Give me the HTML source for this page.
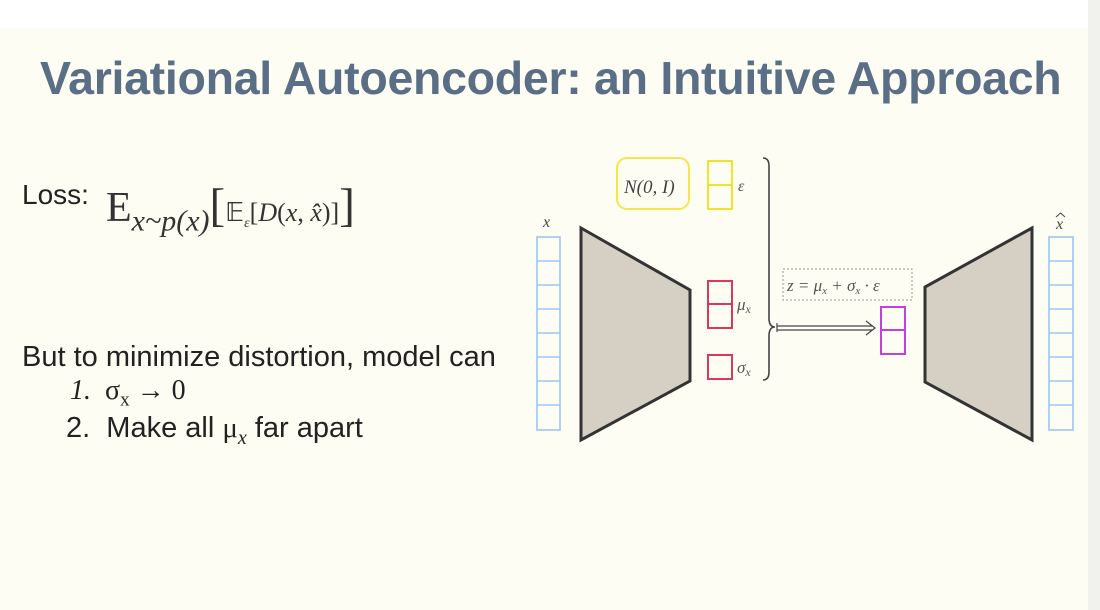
<!DOCTYPE html>
<html><head><style>
body{margin:0;width:1100px;height:610px;overflow:hidden;background:#fdfdf4;position:relative;font-family:"Liberation Sans",sans-serif}
.top{position:absolute;left:0;top:0;width:1100px;height:28px;background:#fff}
.strip{position:absolute;left:1088px;top:0;width:12px;height:610px;background:#f1f1ed}
.t{position:absolute;white-space:nowrap;line-height:1}
.title{left:40px;top:55px;font-size:46.5px;font-weight:bold;color:#5a6f86;letter-spacing:-0.3px}
.serif{font-family:"Liberation Serif",serif}
</style></head><body>
<div class="top"></div><div class="strip"></div>
<div class="t title">Variational Autoencoder: an Intuitive Approach</div>
<div class="t" style="left:22px;top:181px;font-size:28px;color:#222">Loss:</div>
<div class="t serif" style="left:106px;top:183px;font-size:42px;color:#333">E<sub style="font-size:30px;font-style:italic">x~p(x)</sub><span style="font-size:47px">[</span><span style="font-size:26px">𝔼<sub style="font-size:14px"><i>ε</i></sub>[<i>D</i>(<i>x</i>, <i>x̂</i>)]</span><span style="font-size:47px">]</span></div>
<div class="t" style="left:22px;top:343px;font-size:29px;color:#222">But to minimize distortion, model can</div>
<div class="t" style="left:70px;top:376px;font-size:28px;color:#222"><span class="serif"><i>1.</i>&nbsp; σ<sub style="font-size:19px">x</sub> → 0</span></div>
<div class="t" style="left:66px;top:414px;font-size:29px;color:#222">2.&nbsp; Make all <span class="serif">μ<sub style="font-size:20px"><i>x</i></sub></span> far apart</div>
<svg width="1100" height="610" style="position:absolute;left:0;top:0" font-family="Liberation Serif, serif">
<g fill="none" stroke="#9cc8f0" stroke-width="1.6">
<rect x="537" y="237" width="23" height="193"/>
<path d="M537 261h23M537 285h23M537 309h23M537 333h23M537 357h23M537 381h23M537 405h23"/>
<rect x="1049" y="237" width="24" height="193"/>
<path d="M1049 261h24M1049 285h24M1049 309h24M1049 333h24M1049 357h24M1049 381h24M1049 405h24"/>
</g>
<polygon points="581,228 690,290 690,381 581,440" fill="#d6d0c4" stroke="#333" stroke-width="3"/>
<polygon points="1032,228 925,287 925,382 1032,440" fill="#d6d0c4" stroke="#333" stroke-width="3"/>
<rect x="617" y="158" width="72" height="51" rx="10" fill="none" stroke="#f2e84a" stroke-width="2"/>
<text x="624" y="193" font-size="19" fill="#444" font-style="italic">N(0, I)</text>
<g fill="none" stroke="#f2e230" stroke-width="2"><rect x="708" y="161" width="24" height="48"/><path d="M708 185h24"/></g>
<text x="738" y="191" font-size="16" fill="#555" font-style="italic">ε</text>
<g fill="none" stroke="#d83a5c" stroke-width="2"><rect x="708" y="281" width="24" height="47"/><path d="M708 304h24"/><rect x="708" y="355" width="24" height="24"/></g>
<text x="737" y="310" font-size="17" fill="#555" font-style="italic">μ<tspan font-size="12" dy="3">x</tspan></text>
<text x="737" y="373" font-size="17" fill="#555" font-style="italic">σ<tspan font-size="12" dy="3">x</tspan></text>
<path d="M763 158q6 0 6 8v152q0 9 6 9q-6 0 -6 9v36q0 8 -6 8" fill="none" stroke="#444" stroke-width="1.6"/>
<path d="M777 323v9M777 326h96M777 330h96M866 321l9 7l-9 7" fill="none" stroke="#444" stroke-width="1.2"/>
<rect x="783" y="269" width="129" height="31" fill="none" stroke="#999" stroke-width="1" stroke-dasharray="2,2"/>
<text x="787" y="291" font-size="17" fill="#555" font-style="italic">z = μ<tspan font-size="11" dy="3">x</tspan><tspan dy="-3"> + σ</tspan><tspan font-size="11" dy="3">x</tspan><tspan dy="-3"> · ε</tspan></text>
<g fill="none" stroke="#c240e0" stroke-width="2"><rect x="881" y="307" width="24" height="47"/><path d="M881 330h24"/></g>
<text x="543" y="227" font-size="16" fill="#444" font-style="italic">x</text>
<text x="1056" y="229" font-size="16" fill="#444" font-style="italic">x</text>
<path d="M1056 217l4.5 -4l4.5 4" fill="none" stroke="#444" stroke-width="1"/>
</svg>
</body></html>
